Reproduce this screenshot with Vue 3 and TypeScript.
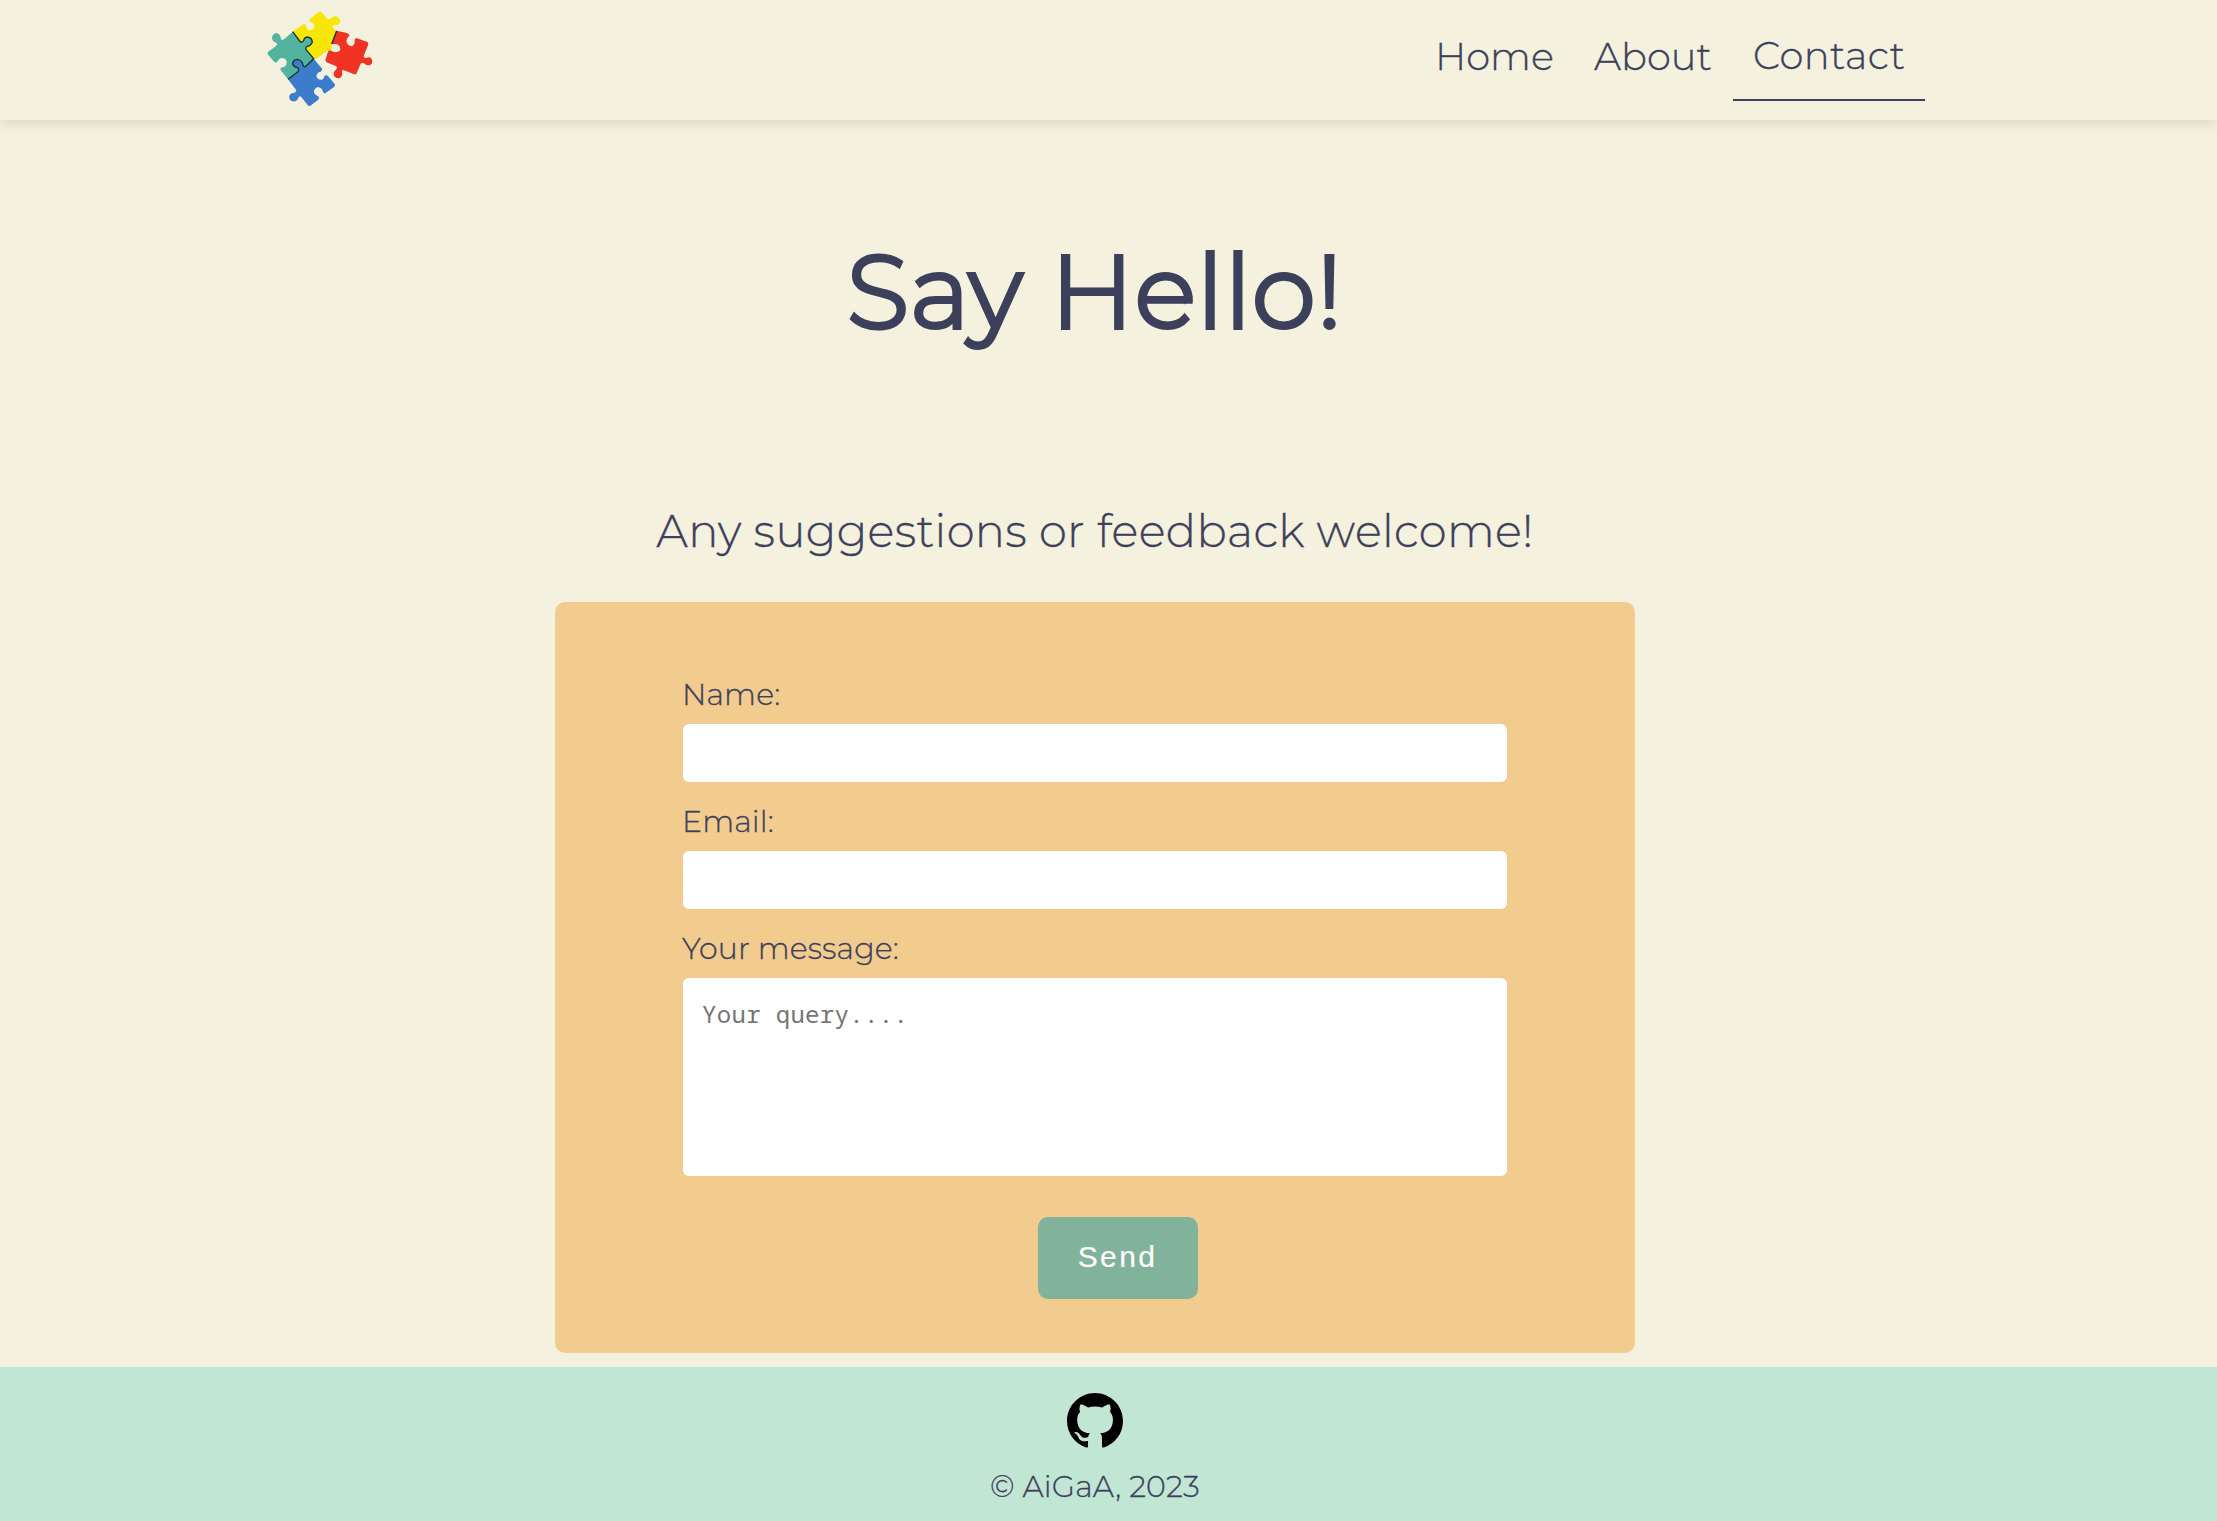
<script setup lang="ts">
import { ref } from 'vue'

interface NavLink {
  id: string
  label: string
}

const links: NavLink[] = [
  { id: 'home', label: 'Home' },
  { id: 'about', label: 'About' },
  { id: 'contact', label: 'Contact' },
]
const current = ref('contact')
const name = ref('')
const email = ref('')
const message = ref('')
</script>

<template>
  <div class="page">
    <header class="header">
      <svg class="logo" viewBox="0 0 390 360" aria-hidden="true">
        <path fill="#f8e608" d="M113 95 L145 73 Q153 70 153 80 Q157 91 168 90 Q180 85 178 74 Q175 67 166 66 Q160 62 166 56 L190 37 Q196 32 201 38 L218 57 Q224 61 229 54 Q236 46 247 50 Q258 57 255 68 Q250 77 239 75 Q230 75 234 84 L245 93 L230 132 Q244 130 254 138 Q260 148 252 155 Q240 160 231 153 Q225 148 215 153 L188 174 Q182 179 176 176 Z" />
        <path fill="#52b49e" d="M113 95 L134 123 Q139 130 146 122 Q147 112 158 111 Q171 113 172 126 Q168 137 157 139 Q149 143 155 151 L176 176 L153 198 Q146 204 144 195 Q141 180 128 178 Q113 179 113 192 Q116 201 126 202 Q135 208 128 216 L99 238 L77 211 Q74 205 80 202 Q92 203 95 190 Q96 177 82 174 Q71 175 68 184 Q62 191 56 184 L38 163 Q36 159 40 155 L64 137 Q69 133 64 128 Q52 126 51 114 Q52 101 65 99 Q77 103 77 114 Q79 124 88 117 Z" />
        <path fill="#3b7dca" d="M176 176 L200 205 Q204 211 197 215 Q185 217 184 229 Q188 241 201 239 Q208 236 208 229 Q211 223 219 228 L239 252 Q242 257 237 261 L211 280 Q205 281 203 274 Q201 262 188 261 Q176 266 177 278 Q181 286 190 289 Q195 295 188 301 L166 317 Q162 320 158 315 L138 290 Q132 286 129 296 Q123 307 112 304 Q101 299 103 287 Q107 278 119 278 Q127 274 122 268 L99 238 L128 216 Q135 208 126 202 Q113 199 113 190 Q114 179 127 178 Q142 181 144 195 Q146 204 153 198 Z" />
        <path fill="#f03323" d="M245 92 L272 98 Q287 102 282 109 Q273 116 275 127 Q280 140 292 138 Q301 132 299 121 Q299 113 306 115 L337 126 Q342 129 339 136 L327 166 Q325 175 334 174 Q343 169 350 176 Q355 187 347 194 Q337 199 330 192 Q322 185 317 191 L304 221 Q301 225 294 221 L267 211 Q260 208 261 217 Q264 228 255 234 Q243 237 237 227 Q234 215 242 210 Q250 201 241 197 L215 187 Q209 184 212 178 L219 155 Q223 148 231 153 Q243 160 254 152 Q259 142 249 135 Q242 131 232 133 Q229 130 231 126 Z" />
        <path fill="#f4f1de" d="M230 133 Q242 130 251 136 Q258 142 256 150 Q248 158 236 156 Q230 152 226 151 Q233 145 230 133Z" />
        <path class="seam" d="M113 95 L134 123 Q139 130 146 122 Q147 112 158 111 Q171 113 172 126 Q168 137 157 139 Q149 143 155 151 L176 176 L153 198 Q146 204 144 195 Q141 180 128 178 Q113 179 113 192 Q116 201 126 202 Q135 208 128 216 L99 238 M245 93 L230 132" />
      </svg>
      <nav class="nav">
        <a v-for="link in links" :key="link.id" class="link" :class="[link.id, { active: current === link.id }]" @click="current = link.id">{{ link.label }}</a>
      </nav>
    </header>

    <main class="main">
      <h1 class="title">Say Hello!</h1>
      <p class="subtitle">Any suggestions or feedback welcome!</p>
      <form class="form" @submit.prevent>
        <label class="label name" for="name">Name:</label>
        <input id="name" v-model="name" class="field" type="text" />
        <label class="label email" for="email">Email:</label>
        <input id="email" v-model="email" class="field" type="email" />
        <label class="label message" for="message">Your message:</label>
        <textarea id="message" v-model="message" class="field area" placeholder="Your query...."></textarea>
        <button class="send" type="submit">Send</button>
      </form>
    </main>

    <footer class="footer">
      <svg class="github" viewBox="0 0 16 16" aria-label="GitHub">
        <path d="M8 0C3.58 0 0 3.58 0 8c0 3.54 2.29 6.53 5.47 7.59.4.07.55-.17.55-.38 0-.19-.01-.82-.01-1.49-2.01.37-2.53-.49-2.69-.94-.09-.23-.48-.94-.82-1.13-.28-.15-.68-.52-.01-.53.63-.01 1.08.58 1.23.82.72 1.21 1.87.87 2.33.66.07-.52.28-.87.51-1.07-1.78-.2-3.64-.89-3.64-3.95 0-.87.31-1.59.82-2.15-.08-.2-.36-1.02.08-2.12 0 0 .67-.21 2.2.82.64-.18 1.32-.27 2-.27s1.36.09 2 .27c1.53-1.04 2.2-.82 2.2-.82.44 1.1.16 1.92.08 2.12.51.56.82 1.27.82 2.15 0 3.07-1.87 3.75-3.65 3.95.29.25.54.73.54 1.48 0 1.07-.01 1.93-.01 2.2 0 .21.15.46.55.38A8.01 8.01 0 0 0 16 8c0-4.42-3.58-8-8-8z" />
      </svg>
      <p class="copyright">© AiGaA, 2023</p>
    </footer>
  </div>
</template>

<style>
body {
  margin: 0;
  background: #f4f1de;
}
</style>

<style scoped>
.page {
  display: flex;
  flex-direction: column;
  height: 1521px;
  overflow: hidden;
  background: #f4f1de;
  color: #3d405b;
  font-family: Montserrat, Inter, sans-serif;
  font-weight: 300;
  -webkit-text-stroke: 0.3px #3d405b;
}
.header {
  display: flex;
  justify-content: space-between;
  flex: none;
  height: 120px;
  padding: 0 292px 0 255px;
  box-shadow: 0 5px 10px rgba(0, 0, 0, 0.09);
}
.logo {
  width: 130px;
  height: 120px;
}
.seam {
  fill: none;
  stroke: #17332f;
  stroke-width: 4;
  stroke-linejoin: round;
}
.nav {
  display: flex;
  align-items: flex-start;
}
.link {
  box-sizing: border-box;
  height: 101px;
  padding: 0 20px;
  font-size: 38.4px;
  line-height: 113px;
  white-space: nowrap;
}
.home {
  width: 159px;
}
.about {
  width: 159px;
}
.contact {
  width: 192px;
  letter-spacing: 0.4px;
}
.active {
  line-height: 111px;
  border-bottom: 2px solid #3d405b;
}
.main {
  display: flex;
  flex-direction: column;
  align-items: center;
  flex: none;
  height: 1247px;
  padding-right: 27px;
}
.title {
  height: 130px;
  margin: 106px 0 0;
  font-size: 102.4px;
  font-weight: 300;
  line-height: 131px;
  letter-spacing: 0.9px;
  white-space: nowrap;
  -webkit-text-stroke: 4px #3d405b;
}
.subtitle {
  height: 60px;
  margin: 145px 0 0;
  font-size: 44.8px;
  line-height: 60px;
  letter-spacing: 0.36px;
  white-space: nowrap;
}
.form {
  display: flex;
  flex-direction: column;
  box-sizing: border-box;
  width: 1080px;
  height: 751px;
  margin-top: 41px;
  padding: 67px 128px 0;
  border-radius: 10px;
  background: #f2cc8f;
}
.label {
  height: 55px;
  margin-left: -1px;
  font-size: 30px;
  line-height: 52px;
  letter-spacing: 0.1px;
}
.field {
  box-sizing: border-box;
  width: 824px;
  height: 58px;
  margin: 0 0 14px;
  padding: 10px 20px;
  border: 0;
  border-radius: 6px;
  outline: 0;
  background: #fff;
  font-size: 24px;
  -webkit-text-stroke: 0;
}
.area {
  height: 198px;
  margin: 0;
  padding: 20px 19px;
  resize: none;
  font: 24px/32px "Noto Sans Mono", "DejaVu Sans Mono", monospace;
  letter-spacing: 0.33px;
}
.area::placeholder {
  color: #757575;
  opacity: 1;
}
.send {
  align-self: center;
  width: 160px;
  height: 82px;
  margin: 41px 0 0 46px;
  padding: 0 1px 2px 0;
  border: 0;
  border-radius: 10px;
  background: #81b29a;
  color: #fff;
  font: 30px "Liberation Sans", Arial, sans-serif;
  letter-spacing: 2.4px;
  -webkit-text-stroke: 0.2px #fff;
}
.footer {
  display: flex;
  flex-direction: column;
  align-items: center;
  flex: none;
  height: 154px;
  padding-right: 27px;
  background: #c1e7d4;
}
.github {
  width: 56px;
  height: 56px;
  margin-top: 25.5px;
}
.copyright {
  margin: 12.5px 0 0;
  font-size: 30px;
  line-height: 52px;
  letter-spacing: 0.15px;
}
</style>
